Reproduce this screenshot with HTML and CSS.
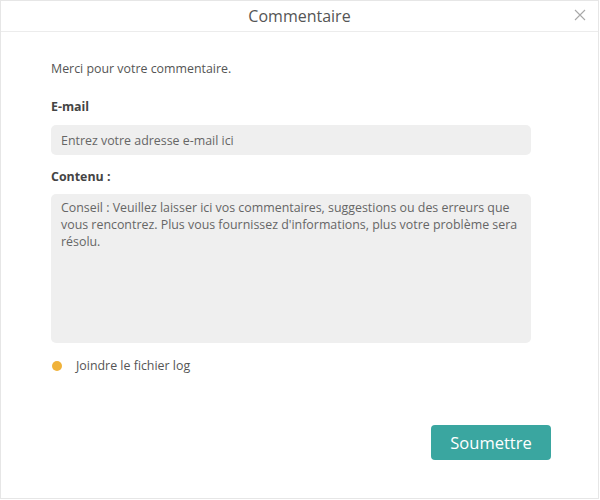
FILE: index.html
```html
<!DOCTYPE html>
<html lang="fr">
<head>
    <meta charset="UTF-8">
    <meta name="viewport" content="width=device-width, initial-scale=1.0">
    <title>Commentaire</title>
    <link rel="stylesheet" href="styles.css">
</head>
<body>
    <div class="window">
        <header class="title-bar">
            <h1>Commentaire</h1>
            <button class="close" type="button" aria-label="Fermer">
                <svg width="12" height="12" viewBox="0 0 12 12">
                    <path d="M1 1 L11 11 M11 1 L1 11" stroke="#a8a8a8" stroke-width="1.1" fill="none"/>
                </svg>
            </button>
        </header>
        <main class="content">
            <p class="intro">Merci pour votre commentaire.</p>
            <form id="feedbackForm">
                <label class="field-label email-label" for="email">E-mail</label>
                <input type="text" id="email" class="field" placeholder="Entrez votre adresse e-mail ici">

                <label class="field-label content-label" for="message">Contenu :</label>
                <textarea id="message" class="field area" placeholder="Conseil : Veuillez laisser ici vos commentaires, suggestions ou des erreurs que vous rencontrez. Plus vous fournissez d'informations, plus votre problème sera résolu."></textarea>

                <div class="attach">
                    <span class="dot"></span>
                    <span>Joindre le fichier log</span>
                </div>

                <div class="actions">
                    <button type="submit" class="submit">Soumettre</button>
                </div>
            </form>
        </main>
    </div>
</body>
</html>
```

FILE: styles.css
```css
body {
    margin: 0;
    padding: 0;
    background-color: #ffffff;
    font-family: "Open Sans", Arial, sans-serif;
    color: #555;
}
.window {
    width: 599px;
    height: 499px;
    box-sizing: border-box;
    border: 1px solid #e6e6e6;
    display: flex;
    flex-direction: column;
}
.title-bar {
    height: 30px;
    border-bottom: 1px solid #ececec;
    display: flex;
    align-items: center;
    justify-content: center;
    position: relative;
}
.title-bar h1 {
    margin: 0;
    font-size: 16px;
    font-weight: normal;
    color: #555;
}
.close {
    position: absolute;
    right: 12px;
    top: 8px;
    background: none;
    border: none;
    padding: 0;
    width: 12px;
    height: 12px;
    cursor: pointer;
}
.close svg {
    display: block;
}
.content {
    padding: 0 0 0 50px;
    flex: 1;
    display: flex;
    flex-direction: column;
}
.intro {
    margin: 28px 0 0;
    font-size: 12.4px;
    line-height: 18px;
}
form {
    flex: 1;
    display: flex;
    flex-direction: column;
}
.field-label {
    display: block;
    font-size: 12.4px;
    font-weight: bold;
    line-height: 18px;
    color: #444;
}
.email-label {
    margin-top: 20px;
}
.content-label {
    margin-top: 13px;
}
.field {
    width: 480px;
    box-sizing: border-box;
    margin-top: 9px;
    height: 30px;
    padding: 0 10px;
    border: none;
    border-radius: 5px;
    background-color: #efefef;
    font-family: inherit;
    font-size: 12.4px;
    color: #555;
    outline: none;
}
.field::placeholder {
    color: #666;
}
.area {
    height: 149px;
    margin-top: 8px;
    padding: 5px 10px;
    line-height: 17px;
    resize: none;
}
.attach {
    display: flex;
    align-items: center;
    gap: 14px;
    margin-top: 14px;
    padding-left: 1px;
    font-size: 12.4px;
    line-height: 18px;
}
.dot {
    width: 10px;
    height: 10px;
    border-radius: 50%;
    background-color: #f0b23a;
}
.actions {
    display: flex;
    justify-content: flex-end;
    padding-right: 47px;
    margin-top: 50px;
}
.submit {
    width: 120px;
    height: 35px;
    border: none;
    border-radius: 4px;
    background-color: #3aa6a0;
    color: white;
    font-family: inherit;
    font-size: 16.5px;
    cursor: pointer;
}
```
